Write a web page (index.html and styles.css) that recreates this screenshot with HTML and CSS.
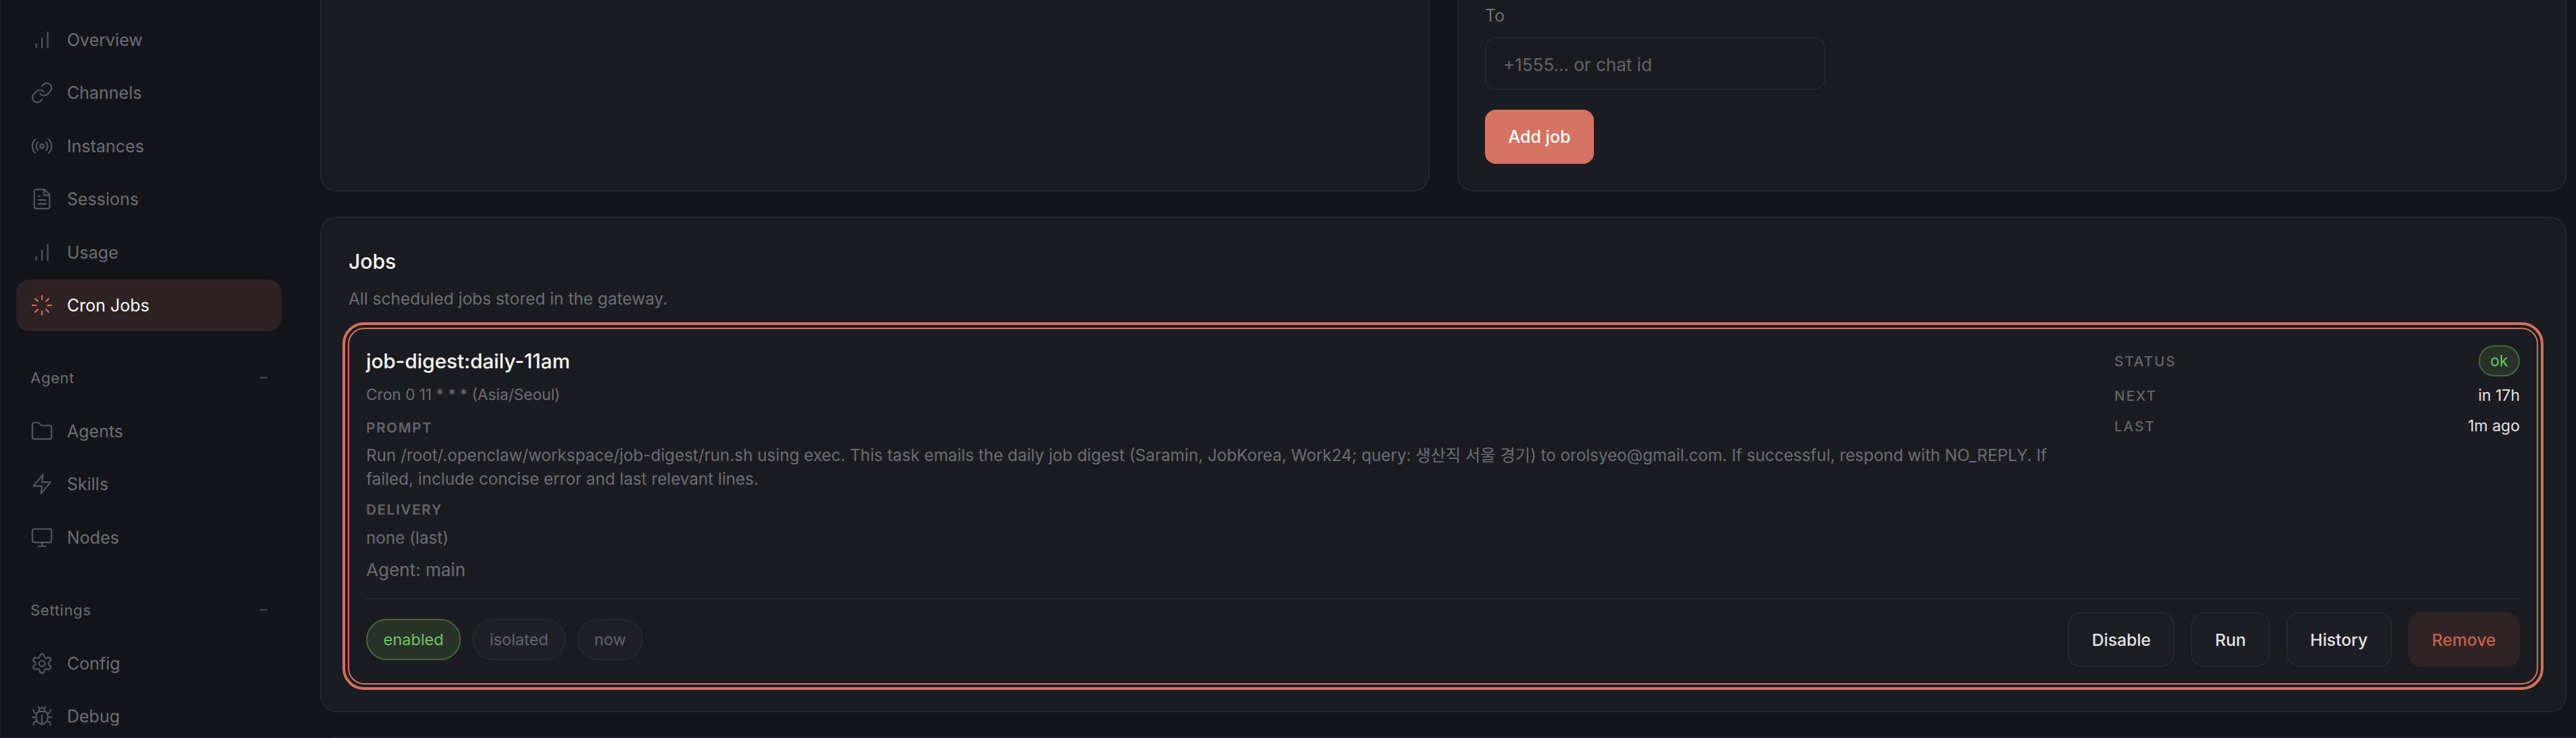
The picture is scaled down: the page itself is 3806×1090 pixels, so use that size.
FILE: index.html
```html
<!DOCTYPE html>
<html lang="en">
<head>
<meta charset="utf-8">
<title>Cron Jobs</title>
<link rel="stylesheet" href="styles.css">
</head>
<body>
<div class="shell">
  <aside class="sidebar">
    <nav class="group">
      <a class="item"><svg class="ico" viewBox="0 0 24 24"><path d="M12 20V10M18 20V4M6 20v-4"/></svg><span>Overview</span></a>
      <a class="item"><svg class="ico" viewBox="0 0 24 24"><path d="M10 13a5 5 0 0 0 7.54.54l3-3a5 5 0 0 0-7.07-7.07l-1.72 1.71"/><path d="M14 11a5 5 0 0 0-7.54-.54l-3 3a5 5 0 0 0 7.07 7.07l1.71-1.71"/></svg><span>Channels</span></a>
      <a class="item"><svg class="ico" viewBox="0 0 24 24"><path d="M4.9 19.1C1 15.2 1 8.8 4.9 4.9"/><path d="M7.8 16.2c-2.3-2.3-2.3-6.1 0-8.5"/><circle cx="12" cy="12" r="2"/><path d="M16.2 7.8c2.3 2.3 2.3 6.1 0 8.5"/><path d="M19.1 4.9C23 8.8 23 15.1 19.1 19"/></svg><span>Instances</span></a>
      <a class="item"><svg class="ico" viewBox="0 0 24 24"><path d="M14.5 2H6a2 2 0 0 0-2 2v16a2 2 0 0 0 2 2h12a2 2 0 0 0 2-2V7.5L14.5 2z"/><path d="M14 2v6h6M16 13H8M16 17H8M10 9H8"/></svg><span>Sessions</span></a>
      <a class="item"><svg class="ico" viewBox="0 0 24 24"><path d="M12 20V10M18 20V4M6 20v-4"/></svg><span>Usage</span></a>
      <a class="item active"><svg class="ico" viewBox="0 0 24 24"><path d="M12 2v4M12 18v4M4.93 4.93l2.83 2.83M16.24 16.24l2.83 2.83M2 12h4M18 12h4M4.93 19.07l2.83-2.83M16.24 7.76l2.83-2.83"/></svg><span>Cron Jobs</span></a>
    </nav>
    <div class="label"><span>Agent</span><span class="dash"></span></div>
    <nav class="group">
      <a class="item"><svg class="ico" viewBox="0 0 24 24"><path d="M4 20h16a2 2 0 0 0 2-2V8a2 2 0 0 0-2-2h-7.93a2 2 0 0 1-1.66-.9l-.82-1.2A2 2 0 0 0 7.93 3H4a2 2 0 0 0-2 2v13c0 1.1.9 2 2 2Z"/></svg><span>Agents</span></a>
      <a class="item"><svg class="ico" viewBox="0 0 24 24"><path d="M13 2 3 14h9l-1 8 10-12h-9l1-8z"/></svg><span>Skills</span></a>
      <a class="item"><svg class="ico" viewBox="0 0 24 24"><rect x="2" y="3" width="20" height="14" rx="2"/><path d="M8 21h8M12 17v4"/></svg><span>Nodes</span></a>
    </nav>
    <div class="label"><span>Settings</span><span class="dash"></span></div>
    <nav class="group">
      <a class="item"><svg class="ico" viewBox="0 0 24 24"><path d="M12.22 2h-.44a2 2 0 0 0-2 2v.18a2 2 0 0 1-1 1.73l-.43.25a2 2 0 0 1-2 0l-.15-.08a2 2 0 0 0-2.73.73l-.22.38a2 2 0 0 0 .73 2.73l.15.1a2 2 0 0 1 1 1.72v.51a2 2 0 0 1-1 1.74l-.15.09a2 2 0 0 0-.73 2.73l.22.38a2 2 0 0 0 2.73.73l.15-.08a2 2 0 0 1 2 0l.43.25a2 2 0 0 1 1 1.73V20a2 2 0 0 0 2 2h.44a2 2 0 0 0 2-2v-.18a2 2 0 0 1 1-1.73l.43-.25a2 2 0 0 1 2 0l.15.08a2 2 0 0 0 2.73-.73l.22-.39a2 2 0 0 0-.73-2.73l-.15-.08a2 2 0 0 1-1-1.74v-.5a2 2 0 0 1 1-1.74l.15-.09a2 2 0 0 0 .73-2.73l-.22-.38a2 2 0 0 0-2.73-.73l-.15.08a2 2 0 0 1-2 0l-.43-.25a2 2 0 0 1-1-1.73V4a2 2 0 0 0-2-2z"/><circle cx="12" cy="12" r="3"/></svg><span>Config</span></a>
      <a class="item"><svg class="ico" viewBox="0 0 24 24"><path d="m8 2 1.88 1.88M14.12 3.88 16 2M9 7.13v-1a3 3 0 1 1 6 0v1"/><path d="M12 20c-3.3 0-6-2.7-6-6v-3a4 4 0 0 1 4-4h4a4 4 0 0 1 4 4v3c0 3.3-2.7 6-6 6"/><path d="M12 20v-9M6.53 9C4.6 8.8 3 7.1 3 5M6 13H2M3 21c0-2.1 1.7-3.9 3.8-4M20.97 5c0 2.1-1.6 3.8-3.5 4M22 13h-4M17.2 17c2.1.1 3.8 1.9 3.8 4"/></svg><span>Debug</span></a>
    </nav>
  </aside>
  <main class="main">
    <div class="top-grid">
      <section class="card"></section>
      <section class="card form-card">
        <label class="field-label">To</label>
        <input class="input" placeholder="+1555... or chat id">
        <button class="btn-primary">Add job</button>
      </section>
    </div>
    <section class="card jobs">
      <h2 class="card-title">Jobs</h2>
      <p class="card-sub">All scheduled jobs stored in the gateway.</p>
      <article class="job">
        <div class="job-top">
          <div class="job-info">
            <div class="job-name">job-digest:daily-11am</div>
            <div class="job-sub cron">Cron 0 11 * * * (Asia/Seoul)</div>
            <div class="cap prompt-cap">PROMPT</div>
            <div class="job-sub prompt">Run /root/.openclaw/workspace/job-digest/run.sh using exec. This task emails the daily job digest (Saramin, JobKorea, Work24; query: 생산직 서울 경기) to orolsyeo@gmail.com. If successful, respond with NO_REPLY. If failed, include concise error and last relevant lines.</div>
            <div class="cap delivery-cap">DELIVERY</div>
            <div class="job-sub delivery">none (last)</div>
            <div class="agent">Agent: main</div>
          </div>
          <dl class="job-state">
            <div class="state-row status"><dt>STATUS</dt><dd><span class="pill ok">ok</span></dd></div>
            <div class="state-row next"><dt>NEXT</dt><dd>in 17h</dd></div>
            <div class="state-row last"><dt>LAST</dt><dd>1m ago</dd></div>
          </dl>
        </div>
        <div class="job-foot">
          <div class="chips">
            <span class="chip chip-on">enabled</span>
            <span class="chip">isolated</span>
            <span class="chip">now</span>
          </div>
          <div class="actions">
            <button class="btn">Disable</button>
            <button class="btn">Run</button>
            <button class="btn">History</button>
            <button class="btn btn-danger">Remove</button>
          </div>
        </div>
      </article>
    </section>
    <div class="next-edge"></div>
  </main>
</div>
</body>
</html>
```
FILE: styles.css
```css
* { box-sizing: border-box; }
html, body { margin: 0; height: 100%; background: #14151a; overflow: hidden; }
body { font-family: Inter, "Noto Sans CJK KR", sans-serif; color: #fafafa; }
.shell { display: grid; grid-template-columns: 473px 1fr; height: 1090px; overflow: hidden; }

.sidebar { padding: 21px 57px 0 23px; height: 1090px; overflow: hidden; border-left: 1px solid #1c1d21; }
.group { display: flex; flex-direction: column; gap: 2.4px; }
.item { display: flex; align-items: center; gap: 20px; height: 76px; padding-left: 21px; border-radius: 19px; font-size: 25px; color: #6b6e76; }
.item.active { background: #2f2225; color: #fafafa; }
.item.active .ico { stroke: #d4705f; }
.ico { width: 34px; height: 34px; flex: none; fill: none; stroke: #55575e; stroke-width: 1.5; stroke-linecap: round; stroke-linejoin: round; }
.label { display: flex; justify-content: space-between; align-items: center; height: 32px; margin: 53px 0 25px; padding: 0 21px; font-size: 22px; letter-spacing: .7px; color: #6b6e76; }
.dash { width: 11px; height: 2px; background: #4b4d54; }

.main { display: flex; flex-direction: column; justify-content: flex-end; height: 1090px; padding-right: 14px; overflow: hidden; }
.top-grid { display: grid; grid-template-columns: 1fr 1fr; gap: 41px; height: 400px; flex: none; margin-bottom: 37px; }
.card { background: #1b1c21; border: 2px solid #26272c; border-radius: 24px; }
.form-card { display: flex; flex-direction: column; justify-content: flex-end; align-items: flex-start; padding: 0 39px 39px; }
.field-label { font-size: 25px; color: #6b6e76; line-height: 32px; margin-bottom: 16px; }
.input { width: 503px; height: 78px; background: #1a1b20; border: 2px solid #26272c; border-radius: 16px; padding: 2px 25px 0; font: 26px Inter, sans-serif; color: #fafafa; outline: none; margin-bottom: 29px; }
.input::placeholder { color: #63656c; opacity: 1; }
.btn-primary { width: 161px; height: 80px; background: #d57363; border: 0; border-radius: 16px; color: #fff; font: 500 25px Inter, sans-serif; padding: 0; }

.jobs { flex: none; height: 732px; padding: 0 40px; }
.card-title { margin: 46px 0 0; font-size: 30px; font-weight: 500; line-height: 36px; color: #fafafa; }
.card-sub { margin: 21px 0 0; font-size: 24.4px; line-height: 32px; color: #6b6d74; }
.job { height: 527px; margin: 27px 0 0 -1px; padding: 0 25px; border: 2px solid #d4705f; border-radius: 24px; outline: 4px solid #d4705f; outline-offset: 4px; background: #1b1c21; display: flex; flex-direction: column; }
.job-top { display: flex; flex: 1; min-height: 0; gap: 58px; }
.job-info { flex: 1; min-width: 0; }
.job-name { margin-top: 27px; font-size: 29.6px; font-weight: 500; line-height: 40px; color: #fafafa; }
.job-sub { font-size: 24.2px; line-height: 35px; color: #6b6d74; }
.cron { margin-top: 12px; font-size: 22.6px; }
.cap { font-size: 20.5px; font-weight: 600; letter-spacing: 1.7px; line-height: 26px; color: #63656c; }
.prompt-cap { margin-top: 18.5px; }
.prompt { margin-top: 10.5px; }
.delivery-cap { margin-top: 14.5px; }
.delivery { margin-top: 11.5px; }
.agent { margin-top: 11.5px; font-size: 26px; line-height: 36px; color: #6b6d74; }

.job-state { width: 599px; flex: none; margin: 0; }
.state-row { display: flex; justify-content: space-between; align-items: center; }
.state-row dt { font-size: 20.5px; font-weight: 500; letter-spacing: 2px; color: #63656c; }
.state-row dd { margin: 0; font-size: 23px; color: #e4e4e7; }
.status { margin-top: 24px; height: 46px; }
.next { margin-top: 12px; height: 32px; }
.last { margin-top: 13px; height: 32px; }
.pill { display: flex; align-items: center; justify-content: center; width: 61px; height: 46px; border-radius: 23px; font-size: 23px; }
.ok { background: #283229; border: 2px solid #46663f; color: #70c566; }

.job-foot { display: flex; justify-content: space-between; align-items: center; flex: none; height: 126px; border-top: 2px solid #26272c; padding-bottom: 5px; }
.chips { display: flex; gap: 17px; }
.chip { display: flex; align-items: center; height: 61px; padding: 0 23.5px; border: 2px solid #27282c; border-radius: 31px; background: #1e1f27; font-size: 23.5px; color: #63656c; }
.chip-on { background: #283229; border-color: #46663f; color: #70c566; }
.actions { display: flex; gap: 24px; }
.btn { height: 81px; padding: 0 33.5px; background: #1c1d25; border: 2px solid #27282c; border-radius: 20px; font: 500 24.6px Inter, sans-serif; color: #e4e4e7; }
.btn-danger { background: #2f2325; border-color: #2f2325; color: #c8604c; }
.next-edge { flex: none; height: 2px; margin: 36px -14px 0 19px; background: #212227; }
```
